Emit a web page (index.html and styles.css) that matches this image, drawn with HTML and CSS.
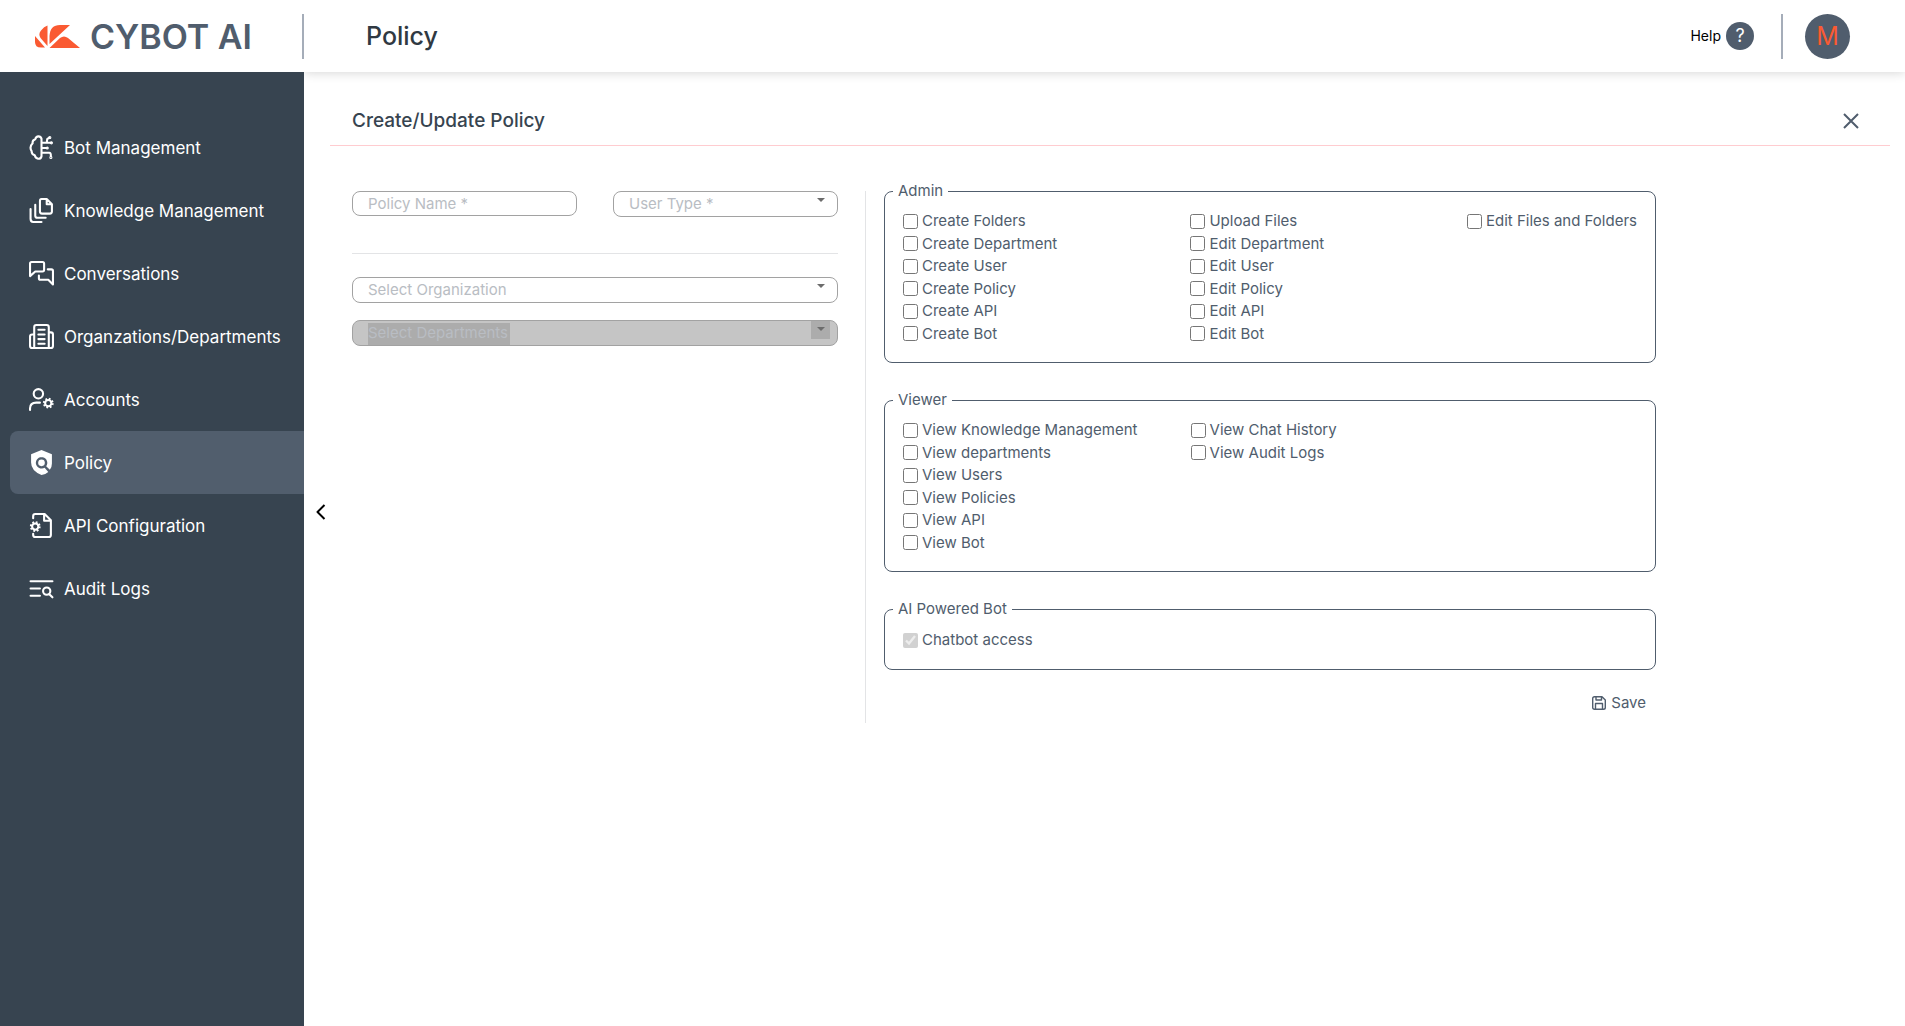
FILE: index.html
```html
<!DOCTYPE html>
<html lang="en">
<head>
<meta charset="utf-8">
<title>Policy - Cybot AI</title>
<meta name="viewport" content="width=device-width, initial-scale=1">
<link rel="stylesheet" href="styles.css">
</head>
<body>
<header class="topbar">
  <a class="brand" href="#">
    <svg class="brand-mark" viewBox="0 0 45 23" aria-hidden="true"><path d="M0 11L10 22.500H6Q0 22.500 0 17ZM12.500.500V21L5.500 13Q3 9 6 5.500Q9 1.500 12.500.500ZM14.500 19V11Q15 0 25 0H35ZM14.500 23L25 13Q29 10 33 13L45 23Z"/></svg>
    <span class="brand-name">CYBOT AI</span>
  </a>
  <div class="topbar-main">
    <h1>Policy</h1>
    <a class="help" href="#">Help <span class="help-mark">?</span></a>
    <button class="avatar" type="button" aria-label="Account">M</button>
  </div>
</header>
<div class="layout">
  <nav class="sidebar">
    <a href="#"><svg viewBox="0 0 24 24"><path d="M12 3.500C11 .500 7 .500 6 4Q3 5 3.500 8Q0 11.500 2.500 15.500Q2.500 18.500 5.500 19.500C6.500 23.500 11 24 12 20.500ZM12 7.500H17L17.500 4L19.500 2.500M17 7.500H21.500M12 12.500H17.500M12 17H19.500Q21 17 21 20"/><circle cx="20" cy="2.500" r=".5"/><circle cx="21.500" cy="7.500" r=".5"/><circle cx="17.500" cy="12.500" r=".5"/><circle cx="21" cy="21.500" r=".5"/></svg>Bot Management</a>
    <a href="#"><svg viewBox="0 0 24 24"><path d="M12 1H17L22 6V13Q22 15 20 15H12.500Q10.500 15 10.500 13V3Q10.500 1 12 1ZM17 1V6H22M6 6.500V17Q6 19 8 19H16M1.500 10.500V20Q1.500 23 4 23H12"/></svg>Knowledge Management</a>
    <a href="#"><svg viewBox="0 0 24 24"><path d="M2.500 1H13Q14.500 1 14.500 2.500V8.500Q14.500 10 13 10H6L1 14.500V2.500Q1 1 2.500 1ZM18 8H21.500Q23 8 23 9.500V22.500L18.500 18H11Q9.500 18 9.500 16.500V14"/></svg>Conversations</a>
    <a href="#"><svg viewBox="0 0 24 24"><path d="M5 23V3Q5 1 7 1H17Q19 1 19 3V23M5 10H3Q1 10 1 12V21Q1 23 3 23H21Q23 23 23 21V10Q23 8 21 8H19M9 5.500H15M9 10H15M9 14.500H15M9 19H15"/></svg>Organzations/Departments</a>
    <a href="#"><svg viewBox="0 0 24 24"><circle cx="9" cy="6.500" r="4.500"/><path d="M1 22V20.500Q1 15 7 15H10.500"/><circle class="gear" cx="18.500" cy="15.500" r="4.200"/><circle cx="18.500" cy="15.500" r="3"/></svg>Accounts</a>
    <a href="#" class="active" aria-current="page"><svg class="solid" viewBox="0 0 24 24"><path d="M12 0L22 4V13Q22 17 20 19L16.500 15.600A5.500 5.500 0 1 0 15 17L18.500 21Q15 24 12 24Q2 20 2 12V4Z"/><circle cx="12" cy="12.300" r="3.200"/></svg>Policy</a>
    <a href="#"><svg viewBox="0 0 24 24"><path d="M4 5V3Q4 1 6 1H15L21 7V21Q21 23 19 23H6Q4 23 4 21V20M14.500 1V7.500H21"/><circle class="gear" cx="6" cy="13" r="4.200"/><circle cx="6" cy="13" r="3"/></svg>API Configuration</a>
    <a href="#"><svg viewBox="0 0 24 24"><path d="M1.500 5H22.500M1.500 12H10.500M1.500 19H10.500M20 18L22.500 20.500"/><circle cx="17" cy="14.500" r="3.500"/></svg>Audit Logs</a>
  </nav>
  <main class="content">
    <div class="page-head">
      <h2>Create/Update Policy</h2>
      <button class="icon-button" type="button" aria-label="Close"><svg viewBox="0 0 16 16"><path d="M1 1L15 15M15 1L1 15"/></svg></button>
    </div>
    <button class="collapse" type="button" aria-label="Collapse menu"><svg viewBox="0 0 10 16"><path d="M8.500 1L1.500 8L8.500 15"/></svg></button>
    <form class="policy-form">
      <div class="scope">
        <div class="field-row">
          <input class="field" type="text" placeholder="Policy Name *" aria-label="Policy Name">
          <div class="select"><select class="field" aria-label="User Type"><option>User Type *</option></select></div>
        </div>
        <hr>
        <div class="select"><select class="field" aria-label="Select Organization"><option>Select Organization</option></select></div>
        <div class="select disabled"><select class="field" aria-label="Select Departments" disabled><option>Select Departments</option></select></div>
      </div>
      <div class="permissions">
        <fieldset>
          <legend>Admin</legend>
          <div class="checks">
            <label><input type="checkbox">Create Folders</label>
            <label><input type="checkbox">Create Department</label>
            <label><input type="checkbox">Create User</label>
            <label><input type="checkbox">Create Policy</label>
            <label><input type="checkbox">Create API</label>
            <label><input type="checkbox">Create Bot</label>
            <label><input type="checkbox">Upload Files</label>
            <label><input type="checkbox">Edit Department</label>
            <label><input type="checkbox">Edit User</label>
            <label><input type="checkbox">Edit Policy</label>
            <label><input type="checkbox">Edit API</label>
            <label><input type="checkbox">Edit Bot</label>
            <label><input type="checkbox">Edit Files and Folders</label>
          </div>
        </fieldset>
        <fieldset>
          <legend>Viewer</legend>
          <div class="checks">
            <label><input type="checkbox">View Knowledge Management</label>
            <label><input type="checkbox">View departments</label>
            <label><input type="checkbox">View Users</label>
            <label><input type="checkbox">View Policies</label>
            <label><input type="checkbox">View API</label>
            <label><input type="checkbox">View Bot</label>
            <label><input type="checkbox">View Chat History</label>
            <label><input type="checkbox">View Audit Logs</label>
          </div>
        </fieldset>
        <fieldset>
          <legend>AI Powered Bot</legend>
          <div class="checks single">
            <label><input type="checkbox" checked disabled>Chatbot access</label>
          </div>
        </fieldset>
        <button class="save" type="button"><svg viewBox="0 0 14 14"><path d="M2.500.700H10L13.300 4V11.500Q13.300 13.300 11.500 13.300H2.500Q.700 13.300.700 11.500V2.500Q.700.700 2.500.700ZM4 .700V4H9.500V.700M3.500 13V7.500H10.500V13"/></svg>Save</button>
      </div>
    </form>
  </main>
</div>
</body>
</html>
```
FILE: styles.css
```css
* { box-sizing: border-box; }
body {
  margin: 0;
  min-height: 100vh;
  display: flex;
  flex-direction: column;
  background: #fff;
  color: #505d6d;
  font: 15px/22px Inter, "Liberation Sans", sans-serif;
}
a { color: inherit; text-decoration: none; }
button { padding: 0; border: 0; background: none; color: inherit; font: inherit; cursor: pointer; }
svg { display: block; fill: none; stroke: currentColor; stroke-width: 2; stroke-linejoin: round; }
h1, h2 { margin: 0; font-weight: 500; }

.topbar { display: flex; height: 72px; }
.brand { display: flex; align-items: center; gap: 10px; width: 304px; padding-left: 35px; }
.brand::after { content: ""; width: 2px; height: 45px; margin-left: auto; background: #a5adb9; }
.brand-mark { width: 45px; height: 23px; fill: #fa5a32; stroke: none; }
.brand-name { padding-top: 2px; font-size: 34px; line-height: 40px; font-weight: 600; white-space: nowrap; }
.topbar-main {
  flex: 1;
  display: flex;
  align-items: center;
  padding: 0 55px 0 62px;
  box-shadow: 0 1px 10px rgba(0, 0, 0, .16);
  clip-path: inset(0 0 -14px 0);
}
h1 { margin-right: auto; color: #303942; font-size: 25px; line-height: 32px; }
.help { display: flex; align-items: center; gap: 5px; color: #000; font-size: 14px; }
.help-mark { width: 28px; border-radius: 50%; background: #505d6d; color: #fff; font-size: 18px; line-height: 28px; text-align: center; }
.help::after { content: ""; width: 2px; height: 45px; margin: 0 22px; background: #a5adb9; }
.avatar { width: 45px; height: 45px; border-radius: 50%; background: #505d6d; color: #fa5a32; font-size: 25px; }

.layout { flex: 1; display: flex; }
.sidebar { width: 304px; padding: 44px 0 44px 10px; background: #374450; color: #fff; z-index: 1; }
.sidebar a { display: flex; align-items: center; gap: 10px; height: 63px; padding-left: 19px; border-radius: 8px 0 0 8px; font-size: 17px; white-space: nowrap; }
.sidebar a.active { background: #515e6d; }
.sidebar svg { width: 25px; height: 25px; stroke-linecap: round; }
.sidebar .solid { fill: #fff; stroke: none; }
.gear { stroke-width: 2; stroke-dasharray: 1.650 1.650; stroke-linecap: butt; }

.content { flex: 1; position: relative; }
.page-head { display: flex; align-items: center; justify-content: space-between; height: 74px; margin: 0 15px 0 26px; padding: 24px 31px 0 22px; border-bottom: 1px solid #ffccd0; }
h2 { color: #374450; font-size: 19px; line-height: 28px; }
.icon-button svg { width: 16px; height: 16px; }
.collapse { position: absolute; left: 12px; top: 432px; color: #000; }
.collapse svg { width: 10px; height: 16px; }

.policy-form { display: grid; grid-template-columns: 513fr 791fr; padding: 45px 249px 0 48px; }
.scope { padding-right: 27px; }
.field-row { display: grid; grid-template-columns: 1fr 1fr; gap: 36px; align-items: start; }
.field {
  display: block;
  width: 100%;
  height: 25px;
  padding: 0 15px;
  border: 1px solid #a2a2a2;
  border-radius: 8px;
  appearance: none;
  background: none;
  color: #b9bdc3;
  font: inherit;
}
select.field { height: 26px; }
.field::placeholder { color: #b9bdc3; opacity: 1; }
.select { position: relative; }
.select::after { content: ""; position: absolute; right: 13px; top: 7px; border: 4px solid transparent; border-top-color: #6c6c6c; border-bottom: 0; }
.scope hr { height: 1px; margin: 36px 0 23px; border: 0; background: #e3e4e6; }
.disabled { margin-top: 17px; }
.disabled .field {
  opacity: 1;
  background:
    linear-gradient(#acacac, #acacac) 15px 2px / 142px 22px no-repeat,
    linear-gradient(#acacac, #acacac) right 7px top 0 / 19px 18px no-repeat,
    #c5c5c5;
}

.permissions { display: flex; flex-direction: column; gap: 26px; padding-left: 18px; border-left: 1px solid #e3e4e6; }
fieldset { min-width: 0; margin: -11px 0 0; padding: 8px 18px 17px; border: 1px solid #505d6d; border-radius: 8px; }
fieldset + fieldset { margin: 0; }
legend { margin-left: -10px; padding: 0 5px; line-height: 22px; }
.checks { display: grid; grid-template: repeat(6, 1fr) / 288fr 277fr 170fr; grid-auto-flow: column; height: 135px; }
.checks.single { grid-template-rows: 1fr; height: 24px; }
.checks label { display: flex; align-items: center; gap: 4px; white-space: nowrap; }
.checks input { width: 15px; height: 15px; margin: 0; }
.save { display: flex; align-items: center; gap: 5px; align-self: flex-end; margin: -4px 10px 9px 0; }
.save svg { width: 14px; height: 14px; stroke-width: 1.400; }
```
